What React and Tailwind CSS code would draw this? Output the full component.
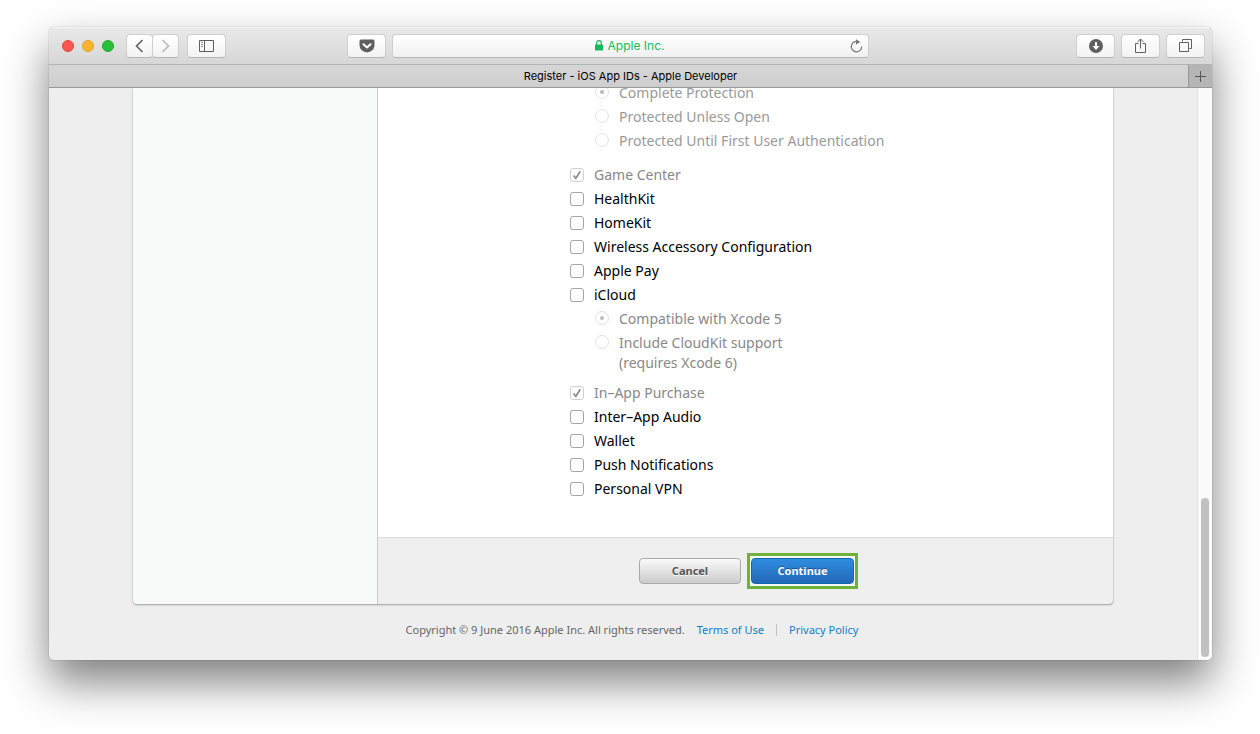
import clsx from "clsx";

const SERVICES = [
  {
    id: "data-protection",
    options: [
      { id: "dp-complete", label: "Complete Protection", checked: true },
      { id: "dp-unless-open", label: "Protected Unless Open" },
      { id: "dp-first-auth", label: "Protected Until First User Authentication" },
    ],
    optionsClass: "pb-[10px] text-[#999]",
  },
  { id: "game-center", label: "Game Center", checked: true, disabled: true },
  { id: "healthkit", label: "HealthKit" },
  { id: "homekit", label: "HomeKit" },
  { id: "wireless", label: "Wireless Accessory Configuration" },
  { id: "apple-pay", label: "Apple Pay" },
  {
    id: "icloud",
    label: "iCloud",
    options: [
      { id: "icloud-xcode5", label: "Compatible with Xcode 5", checked: true },
      {
        id: "icloud-cloudkit",
        label: "Include CloudKit support",
        note: "(requires Xcode 6)",
      },
    ],
    optionsClass: "pb-[6px] text-[#888]",
  },
  { id: "in-app-purchase", label: "In–App Purchase", checked: true, disabled: true },
  { id: "inter-app-audio", label: "Inter–App Audio" },
  { id: "wallet", label: "Wallet" },
  { id: "push", label: "Push Notifications" },
  { id: "vpn", label: "Personal VPN" },
];

const ToolbarButton = ({ label, className, children }) => (
  <button
    type="button"
    aria-label={label}
    className={clsx(
      "flex h-6 items-center justify-center rounded-[4px] border border-[#cfcfcf] border-b-[#b5b5b5] bg-linear-to-b from-white to-[#f3f3f3] text-[#5f5f5f]",
      className
    )}
  >
    {children}
  </button>
);

const Chevron = ({ d, className }) => (
  <svg width="9" height="14" viewBox="0 0 9 14" fill="none" className={className}>
    <path d={d} stroke="currentColor" strokeWidth="1.6" />
  </svg>
);

const SidebarIcon = () => (
  <svg width="15" height="12" viewBox="0 0 15 12" fill="none" stroke="currentColor">
    <path d="M.5.5h14v11H.5zM5.5.5v11" />
    <path d="M2 2.5h2M2 4.5h2M2 6.5h2" strokeOpacity=".7" />
  </svg>
);

const PocketIcon = () => (
  <svg width="16" height="14" viewBox="0 0 16 14">
    <path
      d="M2 .5h12A1.5 1.5 0 0 1 15.500 2v4.200a7.500 7.300 0 0 1-15 0V2A1.500 1.500 0 0 1 2 .5z"
      fill="currentColor"
    />
    <path
      d="M4.500 5.200 8 8.500l3.500-3.300"
      fill="none"
      stroke="white"
      strokeWidth="2"
      strokeLinecap="round"
      strokeLinejoin="round"
    />
  </svg>
);

const LockIcon = () => (
  <svg width="8" height="11" viewBox="0 0 8 11">
    <rect y="4.500" width="8" height="6" rx=".6" fill="currentColor" />
    <path d="M1.700 5V3a2.300 2.300 0 0 1 4.600 0v2" fill="none" stroke="currentColor" strokeWidth="1.200" />
  </svg>
);

const ReloadIcon = () => (
  <svg width="13" height="14" viewBox="0 0 13 14">
    <path d="M8.200 2.700A5.200 5.200 0 1 0 11.700 7.500" fill="none" stroke="currentColor" strokeWidth="1.200" />
    <path d="M6 .3 10.300 3 6 5.600z" fill="currentColor" />
  </svg>
);

const DownloadIcon = () => (
  <svg width="14" height="14" viewBox="0 0 14 14">
    <circle cx="7" cy="7" r="7" fill="currentColor" />
    <path d="M6 3h2v4h2.500L7 11 3.500 7H6z" fill="white" />
  </svg>
);

const ShareIcon = () => (
  <svg width="13" height="16" viewBox="0 0 13 16" fill="none" stroke="currentColor">
    <path d="M4.500 5.500h-3v9h10v-9h-3M6.500 10.500V1M3.500 4l3-3 3 3" />
  </svg>
);

const TabsIcon = () => (
  <svg width="13" height="13" viewBox="0 0 13 13" fill="none" stroke="currentColor">
    <path d="M.5 3.500h9v9h-9z" />
    <path d="M3.500 2.500V.5h9v9h-2" />
  </svg>
);

const BrowserToolbar = () => (
  <header className="flex h-[38px] items-center border-b border-[#b3b3b3] bg-linear-to-b from-[#e9e9e9] to-[#d7d7d7] px-[7px] shadow-[inset_0_1px_0_#f5f5f5]">
    <div className="flex flex-1 items-center">
      <div className="ml-[6px] flex gap-2">
        <button type="button" aria-label="Close" className="size-3 rounded-full border border-[#e2463f] bg-[#fc5650]" />
        <button type="button" aria-label="Minimize" className="size-3 rounded-full border border-[#e0a02a] bg-[#fdb52e]" />
        <button type="button" aria-label="Zoom" className="size-3 rounded-full border border-[#1fa934] bg-[#27c138]" />
      </div>
      <ToolbarButton label="Back" className="ml-3 w-[27px]">
        <Chevron d="M7.500 1 1.500 7l6 6" />
      </ToolbarButton>
      <ToolbarButton label="Forward" className="-ml-px w-[27px]">
        <Chevron d="m1.500 1 6 6-6 6" className="text-[#b8b8b8]" />
      </ToolbarButton>
      <ToolbarButton label="Show sidebar" className="ml-2 w-[39px]">
        <SidebarIcon />
      </ToolbarButton>
      <ToolbarButton label="Save to Pocket" className="mr-[6px] ml-auto w-[39px]">
        <PocketIcon />
      </ToolbarButton>
    </div>
    <div className="flex h-6 w-[41.5%] items-center rounded-[4px] border border-[#cfcfcf] border-b-[#b5b5b5] bg-linear-to-b from-white to-[#f1f1f1] pr-[5px]">
      <div className="flex flex-1 items-center justify-center gap-[5px] pl-4 text-[12px] text-[#12bc5c]">
        <LockIcon />
        <span>Apple Inc.</span>
      </div>
      <button type="button" aria-label="Reload" className="text-[#777]">
        <ReloadIcon />
      </button>
    </div>
    <div className="flex flex-1 justify-end gap-[6px]">
      <ToolbarButton label="Downloads" className="w-[39px]">
        <DownloadIcon />
      </ToolbarButton>
      <ToolbarButton label="Share" className="w-[39px]">
        <ShareIcon />
      </ToolbarButton>
      <ToolbarButton label="Show all tabs" className="w-[39px]">
        <TabsIcon />
      </ToolbarButton>
    </div>
  </header>
);

const TabBar = () => (
  <div className="flex h-[23px] border-b border-[#989898] bg-linear-to-b from-[#d6d6d6] to-[#cecece]">
    <div className="flex flex-1 items-center justify-center pl-6 text-[11px] text-black">
      Register - iOS App IDs - Apple Developer
    </div>
    <button
      type="button"
      aria-label="New tab"
      className="flex w-6 items-center justify-center border-l border-[#989898] bg-[#b5b5b5] text-[#555]"
    >
      <svg width="11" height="11" viewBox="0 0 11 11" stroke="currentColor">
        <path d="M5.500 0v11M0 5.500h11" />
      </svg>
    </button>
  </div>
);

const ServiceCheckbox = ({ id, label, checked, disabled }) => (
  <div className="flex h-6 items-center gap-[10px]">
    <span className="grid size-[14px]">
      <input
        id={id}
        type="checkbox"
        defaultChecked={checked}
        disabled={disabled}
        className="peer col-start-1 row-start-1 size-[14px] appearance-none rounded-[3px] border border-[#a3a3a3] bg-white disabled:border-[#d0d0d0]"
      />
      <svg
        viewBox="0 0 14 14"
        fill="none"
        className="pointer-events-none invisible col-start-1 row-start-1 size-[14px] text-[#888] peer-checked:visible"
      >
        <path d="m3.500 7.500 2.300 2.800 4.500-7" stroke="currentColor" strokeWidth="1.600" />
      </svg>
    </span>
    <label htmlFor={id} className={disabled ? "text-[#888]" : "text-black"}>
      {label}
    </label>
  </div>
);

const ServiceOption = ({ id, group, label, note, checked }) => (
  <div className="flex items-start gap-[10px] py-[2px]">
    <span className="mt-[2px] grid size-[14px] shrink-0 place-items-center">
      <input
        id={id}
        name={group}
        type="radio"
        defaultChecked={checked}
        disabled
        className="peer col-start-1 row-start-1 size-[14px] appearance-none rounded-full border border-[#e2e2e2] bg-white"
      />
      <span className="pointer-events-none invisible col-start-1 row-start-1 size-1 rounded-full bg-[#bbb] peer-checked:visible" />
    </span>
    <label htmlFor={id}>
      {label}
      {note && <span className="block">{note}</span>}
    </label>
  </div>
);

const Services = () => (
  <form className="-mt-[7px] pb-9 pl-48 text-[14px] leading-5">
    {SERVICES.map((service) => (
      <div key={service.id}>
        {service.label && <ServiceCheckbox {...service} />}
        {service.options && (
          <div className={clsx("pl-[25px]", service.optionsClass)}>
            {service.options.map((option) => (
              <ServiceOption key={option.id} group={service.id} {...option} />
            ))}
          </div>
        )}
      </div>
    ))}
  </form>
);

const PageFooter = () => (
  <footer className="flex items-center justify-center pt-4 pb-5 pl-[18px] text-[11px] leading-5 text-[#666]">
    <span>Copyright © 9 June 2016 Apple Inc. All rights reserved.</span>
    <a href="#terms" className="ml-3 text-[#0c7ec5]">
      Terms of Use
    </a>
    <span className="mx-3 h-3 w-px bg-[#c4c4c4]" />
    <a href="#privacy" className="text-[#0c7ec5]">
      Privacy Policy
    </a>
  </footer>
);

export default function App() {
  return (
    <div className="bg-white pt-[27px] pr-12 pb-[74px] pl-[49px] font-[Inter,sans-serif]">
      <div className="overflow-hidden rounded-[5px] shadow-[0_0_1px_rgba(0,0,0,0.6),0_22px_44px_rgba(0,0,0,0.5)]">
        <BrowserToolbar />
        <TabBar />
        <div className="flex overflow-hidden bg-[#eee]">
          <div className="flex-1 font-['Noto_Sans',sans-serif]">
            <div className="mx-auto flex max-w-[980px] overflow-hidden rounded-b-[4px] bg-[#efefef] shadow-[0_0_1px_rgba(0,0,0,0.4),0_1px_2px_rgba(0,0,0,0.3)]">
              <aside className="w-1/4 border-r border-[#c9cccb] bg-[#f7faf9]" />
              <main className="flex-1">
                <div className="overflow-hidden bg-white">
                  <Services />
                </div>
                <div className="flex items-center justify-center gap-[6px] border-t border-[#dcdcdc] py-[15px] pl-[6px] text-[11px] font-bold">
                  <button
                    type="button"
                    className="h-[26px] w-[102px] rounded-[4px] border border-[#aaa] bg-linear-to-b from-[#fafafa] to-[#cbcbcb] text-[#555] text-shadow-[0_1px_0_white]"
                  >
                    Cancel
                  </button>
                  <div className="border-3 border-[#6db33a] bg-[#f8f8f8] px-px py-[2px]">
                    <button
                      type="button"
                      className="block h-[26px] w-[103px] rounded-[4px] border border-[#0d68b0] bg-linear-to-b from-[#2f8de0] to-[#2467b8] text-white text-shadow-[0_-1px_0_rgba(0,0,0,0.4)]"
                    >
                      Continue
                    </button>
                  </div>
                </div>
              </main>
            </div>
            <PageFooter />
          </div>
          <div className="flex w-[15px] flex-col justify-end border-l border-[#e2e2e2] bg-[#fafafa] px-[3px] pb-[3px]">
            <div className="h-[159px] rounded-full bg-[#c1c1c1]" />
          </div>
        </div>
      </div>
    </div>
  );
}
